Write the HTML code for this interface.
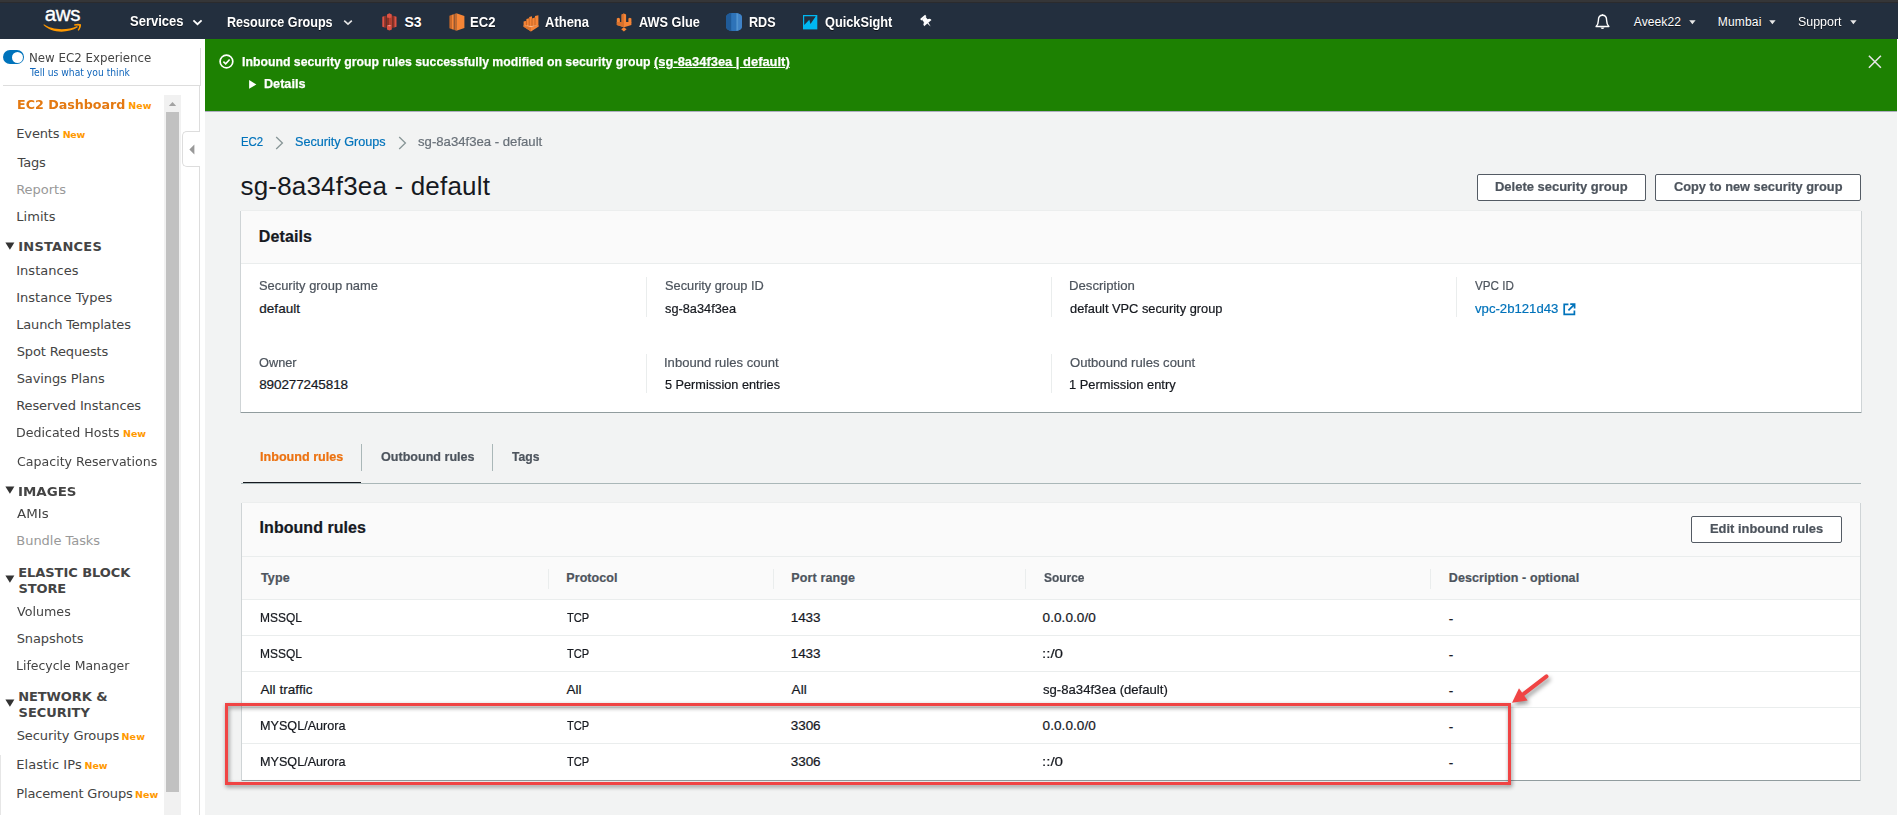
<!DOCTYPE html>
<html lang="en">
<head>
<meta charset="utf-8">
<title>EC2 Management Console - Security Groups</title>
<style>
html,body{margin:0;padding:0}
body{width:1898px;height:815px;overflow:hidden;position:relative;background:#f2f3f3;font-family:"Liberation Sans",sans-serif;font-size:14px;color:#16191f}
.t{position:absolute;white-space:nowrap;line-height:20px;height:20px;transform-origin:0 50%}
.d{font-family:"DejaVu Sans","Liberation Sans",sans-serif}
#main .t{-webkit-text-stroke:0.22px currentColor}
#flashitems .t{-webkit-text-stroke:0.25px currentColor}
.abs{position:absolute}
svg{position:absolute;overflow:visible}
#chrome-strip{position:absolute;left:0;top:0;width:1898px;height:3px;background:linear-gradient(#353638 0,#353638 2px,#2b2b2d 2px,#2b2b2d 3px)}
#topnav{position:absolute;left:0;top:3px;width:1898px;height:36px;background:#232f3e}
#navitems .t{text-shadow:0 1px 0 rgba(0,0,0,.6)}
#sidebar{position:absolute;left:0;top:39px;width:205px;height:776px;background:#fff}
#flash{position:absolute;left:205px;top:39px;width:1692px;height:72px;background:#1d8102;box-shadow:0 1px 0 rgba(90,90,130,.45)}
.panel{position:absolute;background:#fff;box-shadow:0 1px 0 0 #919c9e,1px 0 0 0 #cfd4d6,-1px 0 0 0 #cfd4d6,0 -1px 0 0 #eceeee,1px 1px 0 0 #c3c9cb,-1px 1px 0 0 #c3c9cb}
.phead{position:absolute;left:0;top:0;right:0;background:#fafafa;border-bottom:1px solid #eaeded}
.btn{position:absolute;box-sizing:border-box;border:1px solid #545b64;border-radius:2px;background:#fff}
.vline{position:absolute;width:1px;background:#eaeded}
.hline{position:absolute;height:1px;background:#eaeded}
</style>
</head>
<body>
<div id="chrome-strip"></div>

<header id="topnav">
</header>
<!-- nav content (page coordinates) -->
<div id="navitems">
  <!-- aws logo -->
  <span class="t" style="left:44.8px;top:2.9px;font-size:20.5px;color:#fff;letter-spacing:-0.4px;line-height:22px;height:22px;text-shadow:none;-webkit-text-stroke:0.35px #fff">aws</span>
  <svg style="left:43px;top:22.5px" width="40" height="11" viewBox="0 0 40 11"><path d="M0.9 1.3 C 8 6.9, 24 7.9, 34.2 3 L34.7 4.3 C 24 10.9, 8 9.9, 0.5 2.1 Z" fill="#ff9900"/><path d="M31.2 1.3 Q35 0.3 38 1.2 Q38.5 4 35.7 7.7 L34.6 7.1 Q36.3 4.5 36.2 2.7 Q34 2.3 31.4 2.7Z" fill="#ff9900"/></svg>
  <!-- chevrons -->
  <svg style="left:192px;top:19px" width="11" height="7" viewBox="0 0 11 7"><path d="M1.4 1.4 L5.5 5.2 L9.6 1.4" fill="none" stroke="#fff" stroke-width="1.8"/></svg>
  <svg style="left:342.5px;top:19px" width="10" height="7" viewBox="0 0 10 7"><path d="M1.2 1.6 L5 5.2 L8.8 1.6" fill="none" stroke="#e6e6e6" stroke-width="1.6"/></svg>
  <!-- S3 -->
  <svg style="left:381.5px;top:12.5px" width="15" height="18" viewBox="0 0 15 18">
    <path d="M0.3 3.8 L2.6 3 L2.6 14.6 L0.3 13.8Z" fill="#e05243"/>
    <path d="M14.5 3.8 L12.2 3 L12.2 14.6 L14.5 13.8Z" fill="#e05243"/>
    <path d="M2.6 3 L4.6 2.6 L4.6 15 L2.6 14.6Z" fill="#8c3123"/>
    <path d="M12.2 3 L10.2 2.6 L10.2 15 L12.2 14.6Z" fill="#8c3123"/>
    <path d="M7.4 0.3 L9.8 1.4 L9.8 16.4 L7.4 17.6 L5 16.4 L5 1.4Z" fill="#e05243"/>
    <path d="M5 4.4 L7.4 5 L7.4 12 L5 12.6Z" fill="#8c3123"/>
    <path d="M9.8 4.4 L7.4 5 L7.4 12 L9.8 12.6Z" fill="#b4402f"/>
    <path d="M5.2 12.8 L7.4 13.3 L9.6 12.8 L7.4 12.3Z" fill="#f2b0a9"/>
  </svg>
  <!-- EC2 -->
  <svg style="left:448.5px;top:12.5px" width="16" height="18" viewBox="0 0 16 18">
    <path d="M0.4 2.8 L3 1.8 L3 16.2 L0.4 15.2Z" fill="#c8692b"/>
    <path d="M3 1.8 L4.8 1.2 L4.8 16.8 L3 16.2Z" fill="#f68536"/>
    <path d="M5.3 1.1 L7.4 0.3 L7.4 17.7 L5.3 16.9Z" fill="#c8692b"/>
    <path d="M7.4 0.3 L15.4 3 L15.4 15 L7.4 17.7Z" fill="#f68536"/>
  </svg>
  <!-- Athena -->
  <svg style="left:522.5px;top:14.5px" width="16" height="17" viewBox="0 0 16 17">
    <path d="M0.6 6.6 L3.4 5.8 L3.4 4 L6.2 3.2 L6.2 2 L9 1.2 L9 3.4 L12 2.6 L12 1 L15.4 0.2 L15.4 10.6 L8 12.2 L0.6 10.6Z" fill="#f68536"/>
    <path d="M3.4 5.8 L3.4 11 M6.2 3.2 L6.2 11.6 M9 3.4 L9 11.8 M12 2.6 L12 11.2" stroke="#b85e24" stroke-width="0.8" fill="none"/>
    <path d="M0.3 10.2 L8 12 L15.7 10.2 L15.7 11.6 L8 16.6 L0.3 11.6Z" fill="#f68536"/>
    <path d="M0.3 10.2 L8 12 L15.7 10.2 L8 11Z" fill="#fbbf93"/>
    <path d="M0.3 11.2 L8 12.6 L8 16.6 L0.3 11.6Z" fill="#d9722d"/>
  </svg>
  <!-- Glue -->
  <svg style="left:616px;top:12.5px" width="16" height="19" viewBox="0 0 16 19">
    <path d="M5.6 1.6 L7.85 0.6 L10.1 1.6 L10.1 9.4 L5.6 9.4Z" fill="#f68536"/>
    <path d="M5.6 1.6 L7.85 0.6 L7.85 9.4 L5.6 9.4Z" fill="#d9722d"/>
    <path d="M0.8 5.6 L2.35 4.8 L3.9 5.6 L3.9 9.4 L0.8 9.4Z" fill="#f68536"/>
    <path d="M12.4 5.6 L13.9 4.8 L15.4 5.6 L15.4 9.4 L12.4 9.4Z" fill="#f68536"/>
    <path d="M0.8 8.9 L15.4 8.9 L15.4 12 L8 14.2 L0.8 12Z" fill="#f68536"/>
    <path d="M0.8 8.9 L8 8.9 L8 14.2 L0.8 12Z" fill="#d9722d"/>
    <path d="M7.9 14.2 L10.6 16.3 L7.9 18.4 L5.2 16.3Z" fill="#f68536"/>
  </svg>
  <!-- RDS -->
  <svg style="left:726px;top:13px" width="16" height="18" viewBox="0 0 16 18">
    <rect x="0" y="0" width="16" height="18" rx="6.4" ry="4.4" fill="#2e73b8"/>
    <path d="M5.2 0.1 Q0 0.8 0 4.4 L0 13.6 Q0 17.2 5.2 17.9Z" fill="#1f5b98"/>
    <path d="M10.4 0.1 L12.6 0.7 L12.6 17.3 L10.4 17.9Z" fill="#5294cf"/>
    <path d="M12.6 0.7 Q16 1.6 16 4.4 L16 13.6 Q16 16.4 12.6 17.3Z" fill="#3f82c6"/>
  </svg>
  <!-- QuickSight -->
  <svg style="left:802.8px;top:14.8px" width="15" height="15" viewBox="0 0 15 15">
    <rect x="0" y="0" width="14.3" height="14.4" fill="#00b7f1"/>
    <path d="M1.2 1.2 L12.8 1.2 L7.5 8.9 L6.3 4.8 L1.2 9.9Z" fill="#232f3e"/>
  </svg>
  <!-- pin -->
  <svg style="left:920.3px;top:14.6px" width="13" height="13" viewBox="0 0 12 12">
    <g transform="rotate(-40 6 6)" fill="#fff"><rect x="3" y="0.4" width="6" height="1.9"/><rect x="3.9" y="2" width="4.2" height="3.6"/><path d="M1.6 7.9 Q1.6 5.4 4 5.1 L8 5.1 Q10.4 5.4 10.4 7.9Z"/><path d="M5.3 7.8 L6.7 7.8 L6 12Z"/></g>
  </svg>
  <!-- bell -->
  <svg style="left:1594.6px;top:13.5px" width="15" height="17" viewBox="0 0 16 17" preserveAspectRatio="none">
    <path d="M8 0.2 L8 1.4" stroke="#fff" stroke-width="1.6" fill="none"/><path d="M8 1.2 C4.9 1.2 3.6 3.6 3.6 6.4 C3.6 9.6 2.6 11 1.2 12.6 L14.8 12.6 C13.4 11 12.4 9.6 12.4 6.4 C12.4 3.6 11.1 1.2 8 1.2Z" fill="none" stroke="#fff" stroke-width="1.5" stroke-linejoin="round"/>
    <path d="M5.8 13.4 Q8 16.6 10.2 13.4Z" fill="#fff"/>
  </svg>
  <!-- carets -->
  <svg style="left:1688.6px;top:19.8px" width="7" height="5" viewBox="0 0 7 5"><path d="M0.2 0.2 L6.6 0.2 L3.4 4.3Z" fill="#e8e8e8"/></svg>
  <svg style="left:1768.6px;top:19.8px" width="7" height="5" viewBox="0 0 7 5"><path d="M0.2 0.2 L6.6 0.2 L3.4 4.3Z" fill="#e8e8e8"/></svg>
  <svg style="left:1849.6px;top:19.8px" width="7" height="5" viewBox="0 0 7 5"><path d="M0.2 0.2 L6.6 0.2 L3.4 4.3Z" fill="#e8e8e8"/></svg>
<span class="t g" style="left:130.3px;top:11.0px;font-size:14px;color:#ffffff;font-weight:700;transform:scaleX(0.9287);">Services</span>
<span class="t g" style="left:226.8px;top:11.5px;font-size:14px;color:#ffffff;font-weight:700;transform:scaleX(0.8990);">Resource Groups</span>
<span class="t g" style="left:404.5px;top:11.5px;font-size:14px;color:#ffffff;font-weight:700;letter-spacing:-0.013px;">S3</span>
<span class="t g" style="left:470.1px;top:11.5px;font-size:14px;color:#ffffff;font-weight:700;transform:scaleX(0.9328);">EC2</span>
<span class="t g" style="left:544.8px;top:11.5px;font-size:14px;color:#ffffff;font-weight:700;transform:scaleX(0.9280);">Athena</span>
<span class="t g" style="left:639.0px;top:11.5px;font-size:14px;color:#ffffff;font-weight:700;transform:scaleX(0.9087);">AWS Glue</span>
<span class="t g" style="left:748.6px;top:11.5px;font-size:14px;color:#ffffff;font-weight:700;transform:scaleX(0.8982);">RDS</span>
<span class="t g" style="left:824.6px;top:11.5px;font-size:14px;color:#ffffff;font-weight:700;transform:scaleX(0.9109);">QuickSight</span>
<span class="t g" style="left:1633.8px;top:12.0px;font-size:12px;color:#ffffff;letter-spacing:0.109px;">Aveek22</span>
<span class="t g" style="left:1717.8px;top:12.0px;font-size:12px;color:#ffffff;letter-spacing:0.164px;">Mumbai</span>
<span class="t g" style="left:1798.3px;top:12.0px;font-size:12px;color:#ffffff;transform:scaleX(1.0354);">Support</span>
</div>

<aside id="sidebar"></aside>
<div id="sideitems">
  <!-- borders -->
  <div class="abs" style="left:200px;top:48px;width:1px;height:38px;background:#dddddd"></div>
  <div class="abs" style="left:199px;top:86px;width:1px;height:729px;background:#dddddd"></div>
  <div class="abs" style="left:3px;top:85px;width:198px;height:1px;background:#dddddd"></div>
  <!-- toggle -->
  <div class="abs" style="left:3px;top:50px;width:21px;height:14px;border-radius:7px;background:#0073bb"></div>
  <div class="abs" style="left:11.5px;top:51.5px;width:11px;height:11px;border-radius:6px;background:#fff"></div>
  <!-- scrollbar -->
  <div class="abs" style="left:164px;top:95px;width:17px;height:720px;background:#f1f1f1"></div>
  <div class="abs" style="left:166px;top:112px;width:13px;height:680px;background:#c1c1c1"></div>
  <svg style="left:168px;top:101px" width="9" height="6" viewBox="0 0 9 6"><path d="M0.8 5 L4.5 1 L8.2 5Z" fill="#a3a3a3"/></svg>
  <!-- collapse tab -->
  <div class="abs" style="left:182px;top:131px;width:18px;height:36px;box-sizing:border-box;background:#fff;border:1px solid #dddddd;border-right:0;border-radius:5px 0 0 5px"></div>
  <svg style="left:188.5px;top:144px" width="6" height="11" viewBox="0 0 6 11"><path d="M5.4 0.4 L5.4 10.6 L0.4 5.5Z" fill="#999999"/></svg>
  <div class="abs" style="left:0;top:755px;width:1px;height:60px;background:#e6e6e6"></div>
  <!-- section triangles -->
  <svg style="left:5px;top:241.5px" width="10" height="8" viewBox="0 0 10 8"><path d="M0.4 0.4 L9.4 0.4 L4.9 7.8Z" fill="#333"/></svg>
  <svg style="left:5px;top:486px" width="10" height="8" viewBox="0 0 10 8"><path d="M0.4 0.4 L9.4 0.4 L4.9 7.8Z" fill="#333"/></svg>
  <svg style="left:5px;top:575px" width="10" height="8" viewBox="0 0 10 8"><path d="M0.4 0.4 L9.4 0.4 L4.9 7.8Z" fill="#333"/></svg>
  <svg style="left:5px;top:699px" width="10" height="8" viewBox="0 0 10 8"><path d="M0.4 0.4 L9.4 0.4 L4.9 7.8Z" fill="#333"/></svg>
<span class="t g d" style="left:29.2px;top:47.5px;font-size:13px;color:#444444;transform:scaleX(0.9081);">New EC2 Experience</span>
<span class="t g d" style="left:30.3px;top:62.5px;font-size:10px;color:#1166bb;transform:scaleX(0.9198);">Tell us what you think</span>
<span class="t g d" style="left:17.0px;top:94.5px;font-size:13px;color:#e47911;font-weight:700;transform:scaleX(0.9743);">EC2 Dashboard</span>
<span class="t g d" style="left:128.2px;top:95.5px;font-size:9.5px;color:#ff9900;font-weight:700;letter-spacing:0.134px;">New</span>
<span class="t g d" style="left:16.3px;top:123.5px;font-size:13px;color:#444444;letter-spacing:-0.144px;">Events</span>
<span class="t g d" style="left:62.7px;top:124.5px;font-size:9.5px;color:#ff9900;font-weight:700;letter-spacing:-0.288px;">New</span>
<span class="t g d" style="left:17.5px;top:152.5px;font-size:13px;color:#444444;letter-spacing:-0.160px;">Tags</span>
<span class="t g d" style="left:16.2px;top:179.5px;font-size:13px;color:#999999;letter-spacing:-0.026px;">Reports</span>
<span class="t g d" style="left:16.2px;top:206.5px;font-size:13px;color:#444444;letter-spacing:0.065px;">Limits</span>
<span class="t g d" style="left:18.2px;top:236.5px;font-size:13px;color:#444444;font-weight:700;letter-spacing:0.248px;">INSTANCES</span>
<span class="t g d" style="left:16.2px;top:260.5px;font-size:13px;color:#444444;letter-spacing:0.033px;">Instances</span>
<span class="t g d" style="left:16.2px;top:287.5px;font-size:13px;color:#444444;letter-spacing:0.007px;">Instance Types</span>
<span class="t g d" style="left:16.2px;top:314.5px;font-size:13px;color:#444444;letter-spacing:-0.170px;">Launch Templates</span>
<span class="t g d" style="left:16.7px;top:341.5px;font-size:13px;color:#444444;letter-spacing:-0.140px;">Spot Requests</span>
<span class="t g d" style="left:16.7px;top:368.5px;font-size:13px;color:#444444;letter-spacing:-0.114px;">Savings Plans</span>
<span class="t g d" style="left:16.2px;top:395.5px;font-size:13px;color:#444444;letter-spacing:-0.105px;">Reserved Instances</span>
<span class="t g d" style="left:16.1px;top:422.5px;font-size:13px;color:#444444;transform:scaleX(0.9693);">Dedicated Hosts</span>
<span class="t g d" style="left:123.1px;top:423.5px;font-size:9.5px;color:#ff9900;font-weight:700;letter-spacing:-0.141px;">New</span>
<span class="t g d" style="left:17.0px;top:451.5px;font-size:13px;color:#444444;transform:scaleX(0.9687);">Capacity Reservations</span>
<span class="t g d" style="left:18.4px;top:481.5px;font-size:13px;color:#444444;font-weight:700;transform:scaleX(1.0309);">IMAGES</span>
<span class="t g d" style="left:17.4px;top:504.1px;font-size:13px;color:#444444;transform:scaleX(1.0307);">AMIs</span>
<span class="t g d" style="left:16.3px;top:531.1px;font-size:13px;color:#999999;letter-spacing:-0.035px;">Bundle Tasks</span>
<span class="t g d" style="left:18.2px;top:562.5px;font-size:13px;color:#444444;font-weight:700;letter-spacing:-0.043px;">ELASTIC BLOCK</span>
<span class="t g d" style="left:18.4px;top:578.5px;font-size:13px;color:#444444;font-weight:700;letter-spacing:-0.081px;">STORE</span>
<span class="t g d" style="left:17.2px;top:601.5px;font-size:13px;color:#444444;transform:scaleX(0.9747);">Volumes</span>
<span class="t g d" style="left:16.7px;top:628.5px;font-size:13px;color:#444444;letter-spacing:-0.099px;">Snapshots</span>
<span class="t g d" style="left:16.2px;top:655.5px;font-size:13px;color:#444444;transform:scaleX(0.9595);">Lifecycle Manager</span>
<span class="t g d" style="left:18.2px;top:686.5px;font-size:13px;color:#444444;font-weight:700;letter-spacing:-0.076px;">NETWORK &amp;</span>
<span class="t g d" style="left:18.6px;top:702.5px;font-size:13px;color:#444444;font-weight:700;letter-spacing:-0.033px;">SECURITY</span>
<span class="t g d" style="left:16.7px;top:725.5px;font-size:13px;color:#444444;letter-spacing:-0.089px;">Security Groups</span>
<span class="t g d" style="left:121.5px;top:726.5px;font-size:9.5px;color:#ff9900;font-weight:700;letter-spacing:0.153px;">New</span>
<span class="t g d" style="left:16.2px;top:754.5px;font-size:13px;color:#444444;letter-spacing:0.072px;">Elastic IPs</span>
<span class="t g d" style="left:84.4px;top:755.5px;font-size:9.5px;color:#ff9900;font-weight:700;letter-spacing:0.043px;">New</span>
<span class="t g d" style="left:16.3px;top:783.5px;font-size:13px;color:#444444;letter-spacing:-0.173px;">Placement Groups</span>
<span class="t g d" style="left:135.1px;top:784.5px;font-size:9.5px;color:#ff9900;font-weight:700;">New</span>
</div>

<div id="flash"></div>
<div class="abs" style="left:1897px;top:39px;width:1px;height:776px;background:#fff"></div>
<div id="flashitems">
  <svg style="left:218.5px;top:54px" width="15" height="15" viewBox="0 0 15 15"><circle cx="7.45" cy="7.5" r="6.35" fill="none" stroke="#fff" stroke-width="1.7"/><path d="M4.4 7.6 L6.7 9.8 L10.6 5.5" fill="none" stroke="#fff" stroke-width="1.6"/></svg>
  <svg style="left:248.7px;top:79.9px" width="8" height="9" viewBox="0 0 8 9"><path d="M0.1 0.1 L7.4 4.4 L0.1 8.7Z" fill="#fff"/></svg>
  <svg style="left:1867.6px;top:54.8px" width="14" height="14" viewBox="0 0 14 14"><path d="M0.9 0.7 L12.9 12.7 M12.9 0.7 L0.9 12.7" fill="none" stroke="#e6e6e6" stroke-width="1.6"/></svg>
<span class="t g" style="left:242.2px;top:52.3px;font-size:13.5px;color:#ffffff;font-weight:700;transform:scaleX(0.9094);">Inbound security group rules successfully modified on security group</span>
<span class="t g" style="left:654.3px;top:52.3px;font-size:13.5px;color:#ffffff;font-weight:700;transform:scaleX(0.9568);text-decoration:underline;">(sg-8a34f3ea | default)</span>
<span class="t g" style="left:264.0px;top:73.5px;font-size:13.5px;color:#ffffff;font-weight:700;transform:scaleX(0.9358);">Details</span>
</div>

<main id="main">
  <!-- breadcrumb chevrons -->
  <svg style="left:274.5px;top:135.5px" width="9" height="14" viewBox="0 0 9 14"><path d="M1.2 1 L7.4 7 L1.2 13" fill="none" stroke="#879596" stroke-width="1.3"/></svg>
  <svg style="left:397.5px;top:135.5px" width="9" height="14" viewBox="0 0 9 14"><path d="M1.2 1 L7.4 7 L1.2 13" fill="none" stroke="#879596" stroke-width="1.3"/></svg>
  <!-- header buttons -->
  <div class="btn" style="left:1477px;top:174px;width:169px;height:27px"></div>
  <div class="btn" style="left:1655px;top:174px;width:206px;height:27px"></div>

  <!-- details panel -->
  <section class="panel" style="left:241px;top:211px;width:1620px;height:201px">
    <div class="phead" style="height:52px"></div>
  </section>
  <div class="vline" style="left:646px;top:277px;height:40px"></div>
  <div class="vline" style="left:646px;top:354px;height:39px"></div>
  <div class="vline" style="left:1051px;top:277px;height:40px"></div>
  <div class="vline" style="left:1051px;top:354px;height:39px"></div>
  <div class="vline" style="left:1456px;top:277px;height:40px"></div>
  <!-- external link icon -->
  <svg style="left:1563px;top:302.5px" width="13" height="13" viewBox="0 0 13 13"><path d="M5.4 1.4 L1.2 1.4 L1.2 11.4 L11.4 11.4 L11.4 7.4" fill="none" stroke="#0073bb" stroke-width="1.7"/><path d="M7.2 1.2 L11.6 1.2 L11.6 5.6 M11.4 1.4 L5.4 7.4" fill="none" stroke="#0073bb" stroke-width="1.7"/></svg>

  <!-- tabs -->
  <div class="abs" style="left:241px;top:483px;width:1620px;height:1px;background:#aab7b8"></div>
  <div class="abs" style="left:243px;top:482px;width:118px;height:1px;background:#16191f"></div>
  <div class="abs" style="left:361px;top:444px;width:1px;height:27px;background:#aab7b8"></div>
  <div class="abs" style="left:492px;top:444px;width:1px;height:27px;background:#aab7b8"></div>

  <!-- inbound rules panel -->
  <section class="panel" style="left:242px;top:503px;width:1618px;height:277px">
    <div class="phead" style="height:53px"></div>
    <div class="abs" style="left:0;top:54px;width:1618px;height:42px;background:#fafafa;border-bottom:1px solid #eaeded"></div>
    <div class="hline" style="left:0;top:132px;width:1618px"></div>
    <div class="hline" style="left:0;top:168px;width:1618px"></div>
    <div class="hline" style="left:0;top:204px;width:1618px"></div>
    <div class="hline" style="left:0;top:240px;width:1618px"></div>
  </section>
  <div class="btn" style="left:1691px;top:516px;width:151px;height:27px"></div>
  <div class="vline" style="left:548px;top:569px;height:20px"></div>
  <div class="vline" style="left:773px;top:569px;height:20px"></div>
  <div class="vline" style="left:1025px;top:569px;height:20px"></div>
  <div class="vline" style="left:1430px;top:569px;height:20px"></div>
<span class="t g" style="left:241.0px;top:131.5px;font-size:13.5px;color:#0073bb;transform:scaleX(0.8450);">EC2</span>
<span class="t g" style="left:294.5px;top:131.5px;font-size:13.5px;color:#0073bb;transform:scaleX(0.9366);">Security Groups</span>
<span class="t g" style="left:417.6px;top:131.5px;font-size:13.5px;color:#687078;transform:scaleX(0.9739);">sg-8a34f3ea - default</span>
<span class="t g" style="left:240.5px;top:175.6px;font-size:26px;color:#16191f;letter-spacing:0.183px;-webkit-text-stroke:0;">sg-8a34f3ea - default</span>
<span class="t g" style="left:1495.3px;top:176.9px;font-size:13.5px;color:#4d545d;font-weight:700;transform:scaleX(0.9605);">Delete security group</span>
<span class="t g" style="left:1674.0px;top:176.9px;font-size:13.5px;color:#4d545d;font-weight:700;transform:scaleX(0.9478);">Copy to new security group</span>
<span class="t g" style="left:258.8px;top:226.5px;font-size:16px;color:#16191f;font-weight:700;letter-spacing:0.101px;">Details</span>
<span class="t g" style="left:258.9px;top:275.5px;font-size:13.5px;color:#4d545d;transform:scaleX(0.9546);">Security group name</span>
<span class="t g" style="left:259.2px;top:298.5px;font-size:13.5px;color:#16191f;letter-spacing:0.063px;">default</span>
<span class="t g" style="left:259.2px;top:352.5px;font-size:13.5px;color:#4d545d;transform:scaleX(0.9453);">Owner</span>
<span class="t g" style="left:259.2px;top:374.5px;font-size:13.5px;color:#16191f;letter-spacing:-0.112px;">890277245818</span>
<span class="t g" style="left:665.4px;top:275.5px;font-size:13.5px;color:#4d545d;transform:scaleX(0.9473);">Security group ID</span>
<span class="t g" style="left:665.4px;top:298.5px;font-size:13.5px;color:#16191f;transform:scaleX(0.9456);">sg-8a34f3ea</span>
<span class="t g" style="left:664.3px;top:352.5px;font-size:13.5px;color:#4d545d;transform:scaleX(0.9662);">Inbound rules count</span>
<span class="t g" style="left:665.4px;top:374.5px;font-size:13.5px;color:#16191f;transform:scaleX(0.9402);">5 Permission entries</span>
<span class="t g" style="left:1069.4px;top:275.5px;font-size:13.5px;color:#4d545d;transform:scaleX(0.9745);">Description</span>
<span class="t g" style="left:1070.4px;top:298.5px;font-size:13.5px;color:#16191f;transform:scaleX(0.9490);">default VPC security group</span>
<span class="t g" style="left:1070.3px;top:352.5px;font-size:13.5px;color:#4d545d;transform:scaleX(0.9692);">Outbound rules count</span>
<span class="t g" style="left:1069.4px;top:374.5px;font-size:13.5px;color:#16191f;transform:scaleX(0.9537);">1 Permission entry</span>
<span class="t g" style="left:1475.3px;top:275.5px;font-size:13.5px;color:#4d545d;transform:scaleX(0.8616);">VPC ID</span>
<span class="t g" style="left:1475.3px;top:298.5px;font-size:13.5px;color:#0073bb;transform:scaleX(0.9736);">vpc-2b121d43</span>
<span class="t g" style="left:260.4px;top:446.5px;font-size:13.5px;color:#ec7211;font-weight:700;transform:scaleX(0.9325);">Inbound rules</span>
<span class="t g" style="left:381.2px;top:446.5px;font-size:13.5px;color:#4d545d;font-weight:700;transform:scaleX(0.9313);">Outbound rules</span>
<span class="t g" style="left:512.3px;top:446.5px;font-size:13.5px;color:#4d545d;font-weight:700;transform:scaleX(0.9012);">Tags</span>
<span class="t g" style="left:259.6px;top:518.3px;font-size:16px;color:#16191f;font-weight:700;letter-spacing:0.042px;">Inbound rules</span>
<span class="t g" style="left:1710.0px;top:518.5px;font-size:13.5px;color:#4d545d;font-weight:700;transform:scaleX(0.9549);">Edit inbound rules</span>
<span class="t g" style="left:260.9px;top:568.0px;font-size:12.5px;color:#4d545d;font-weight:700;letter-spacing:0.163px;">Type</span>
<span class="t g" style="left:566.3px;top:568.0px;font-size:12.5px;color:#4d545d;font-weight:700;letter-spacing:0.064px;">Protocol</span>
<span class="t g" style="left:791.3px;top:568.0px;font-size:12.5px;color:#4d545d;font-weight:700;letter-spacing:0.135px;">Port range</span>
<span class="t g" style="left:1044.3px;top:568.0px;font-size:12.5px;color:#4d545d;font-weight:700;transform:scaleX(0.9556);">Source</span>
<span class="t g" style="left:1448.8px;top:568.0px;font-size:12.5px;color:#4d545d;font-weight:700;letter-spacing:0.089px;">Description - optional</span>
<span class="t g" style="left:259.8px;top:607.5px;font-size:13.5px;color:#16191f;transform:scaleX(0.8870);">MSSQL</span>
<span class="t g" style="left:566.5px;top:607.5px;font-size:13.5px;color:#16191f;transform:scaleX(0.8236);">TCP</span>
<span class="t g" style="left:790.7px;top:607.5px;font-size:13.5px;color:#16191f;letter-spacing:-0.059px;">1433</span>
<span class="t g" style="left:1042.6px;top:607.5px;font-size:13.5px;color:#16191f;letter-spacing:0.073px;">0.0.0.0/0</span>
<span class="t g" style="left:1448.7px;top:608.5px;font-size:13.5px;color:#16191f;">-</span>
<span class="t g" style="left:259.8px;top:643.5px;font-size:13.5px;color:#16191f;transform:scaleX(0.8870);">MSSQL</span>
<span class="t g" style="left:566.5px;top:643.5px;font-size:13.5px;color:#16191f;transform:scaleX(0.8236);">TCP</span>
<span class="t g" style="left:790.7px;top:643.5px;font-size:13.5px;color:#16191f;letter-spacing:-0.059px;">1433</span>
<span class="t g" style="left:1042.1px;top:643.5px;font-size:13.5px;color:#16191f;transform:scaleX(1.1188);">::/0</span>
<span class="t g" style="left:1448.7px;top:644.5px;font-size:13.5px;color:#16191f;">-</span>
<span class="t g" style="left:260.4px;top:679.5px;font-size:13.5px;color:#16191f;letter-spacing:0.062px;">All traffic</span>
<span class="t g" style="left:566.5px;top:679.5px;font-size:13.5px;color:#16191f;letter-spacing:0.044px;">All</span>
<span class="t g" style="left:791.5px;top:679.5px;font-size:13.5px;color:#16191f;letter-spacing:0.142px;">All</span>
<span class="t g" style="left:1043.0px;top:679.5px;font-size:13.5px;color:#16191f;transform:scaleX(0.9724);">sg-8a34f3ea (default)</span>
<span class="t g" style="left:1448.7px;top:680.5px;font-size:13.5px;color:#16191f;">-</span>
<span class="t g" style="left:259.7px;top:715.5px;font-size:13.5px;color:#16191f;transform:scaleX(0.9346);">MYSQL/Aurora</span>
<span class="t g" style="left:566.5px;top:715.5px;font-size:13.5px;color:#16191f;transform:scaleX(0.8236);">TCP</span>
<span class="t g" style="left:790.8px;top:715.5px;font-size:13.5px;color:#16191f;letter-spacing:-0.080px;">3306</span>
<span class="t g" style="left:1042.6px;top:715.5px;font-size:13.5px;color:#16191f;letter-spacing:0.073px;">0.0.0.0/0</span>
<span class="t g" style="left:1448.7px;top:716.5px;font-size:13.5px;color:#16191f;">-</span>
<span class="t g" style="left:259.7px;top:751.5px;font-size:13.5px;color:#16191f;transform:scaleX(0.9346);">MYSQL/Aurora</span>
<span class="t g" style="left:566.5px;top:751.5px;font-size:13.5px;color:#16191f;transform:scaleX(0.8236);">TCP</span>
<span class="t g" style="left:790.8px;top:751.5px;font-size:13.5px;color:#16191f;letter-spacing:-0.080px;">3306</span>
<span class="t g" style="left:1042.1px;top:751.5px;font-size:13.5px;color:#16191f;transform:scaleX(1.1188);">::/0</span>
<span class="t g" style="left:1448.7px;top:752.5px;font-size:13.5px;color:#16191f;">-</span>
  <!-- annotation: red highlight box + arrow -->
  <div class="abs" style="left:225px;top:703px;width:1286px;height:82px;box-sizing:border-box;border:3px solid #f04444;filter:drop-shadow(1.5px 2.5px 2px rgba(0,0,0,.45))"></div>
  <svg style="left:1505px;top:668px;filter:drop-shadow(2px 3px 2px rgba(0,0,0,.38))" width="50" height="42" viewBox="0 0 50 42"><path d="M41.5 8.4 L19 25.6" fill="none" stroke="#f04444" stroke-width="4" stroke-linecap="round"/><path d="M7 34.8 L14 20.2 L22.6 32.4Z" fill="#f04444"/></svg>
</main>
</body>
</html>
